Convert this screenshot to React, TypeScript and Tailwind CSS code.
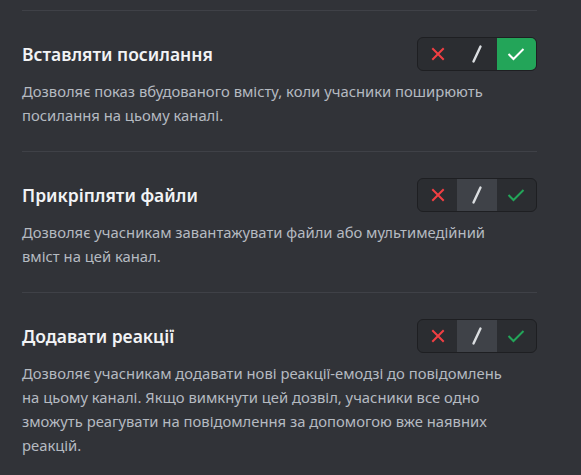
import React from "react";

type State = "deny" | "neutral" | "allow";

interface Perm {
  title: string;
  desc: string;
  state: State;
}

const perms: Perm[] = [
  {
    title: "Вставляти посилання",
    desc: "Дозволяє показ вбудованого вмісту, коли учасники поширюють посилання на цьому каналі.",
    state: "allow",
  },
  {
    title: "Прикріпляти файли",
    desc: "Дозволяє учасникам завантажувати файли або мультимедійний вміст на цей канал.",
    state: "neutral",
  },
  {
    title: "Додавати реакції",
    desc: "Дозволяє учасникам додавати нові реакції-емодзі до повідомлень на цьому каналі. Якщо вимкнути цей дозвіл, учасники все одно зможуть реагувати на повідомлення за допомогою вже наявних реакцій.",
    state: "neutral",
  },
];

const Toggle: React.FC<{ state: State }> = ({ state }) => {
  return (
    <div className="flex h-[34px] w-[120px] shrink-0 overflow-hidden rounded-[6px] border border-[#1e1f22] bg-[#2b2d31]">
      <div
        className={`flex w-10 items-center justify-center ${
          state === "deny" ? "bg-[#da373c]" : ""
        }`}
      >
        <svg width="14" height="14" viewBox="0 0 14 14">
          <path
            d="M2 2 L12 12 M12 2 L2 12"
            stroke={state === "deny" ? "#fff" : "#f23f43"}
            strokeWidth="2"
            strokeLinecap="square"
          />
        </svg>
      </div>
      <div
        className={`flex w-10 items-center justify-center ${
          state === "neutral" ? "bg-[#3f4248]" : ""
        }`}
      >
        <svg width="14" height="20" viewBox="0 0 14 20">
          <path
            d="M10.5 2.5 L3.5 17.5"
            stroke="#dbdee1"
            strokeWidth="2.4"
            strokeLinecap="round"
          />
        </svg>
      </div>
      <div
        className={`flex w-10 items-center justify-center ${
          state === "allow" ? "bg-[#23a559]" : ""
        }`}
      >
        <svg width="18" height="14" viewBox="0 0 18 14">
          <path
            d="M1.5 7 L6.5 12 L16.5 2"
            stroke={state === "allow" ? "#fff" : "#23a559"}
            strokeWidth="2"
            fill="none"
            strokeLinejoin="miter"
          />
        </svg>
      </div>
    </div>
  );
};

export default function App() {
  return (
    <div
      className="min-h-screen bg-[#313338] pt-[10px]"
      style={{ fontFamily: '"Noto Sans", "Open Sans", sans-serif' }}
    >
      <div className="ml-[22px] mr-[44px]">
        {perms.map((p) => (
          <section
            key={p.title}
            className="border-t border-[#3f4147] pt-[26px] pb-[24px]"
          >
            <div className="flex h-[34px] items-center justify-between">
              <h3 className="text-[17.5px] font-semibold leading-5 text-[#f2f3f5]">
                {p.title}
              </h3>
              <Toggle state={p.state} />
            </div>
            <p className="mt-2 pr-[20px] text-[14.8px] leading-6 text-[#b5bac1]">
              {p.desc}
            </p>
          </section>
        ))}
      </div>
    </div>
  );
}
